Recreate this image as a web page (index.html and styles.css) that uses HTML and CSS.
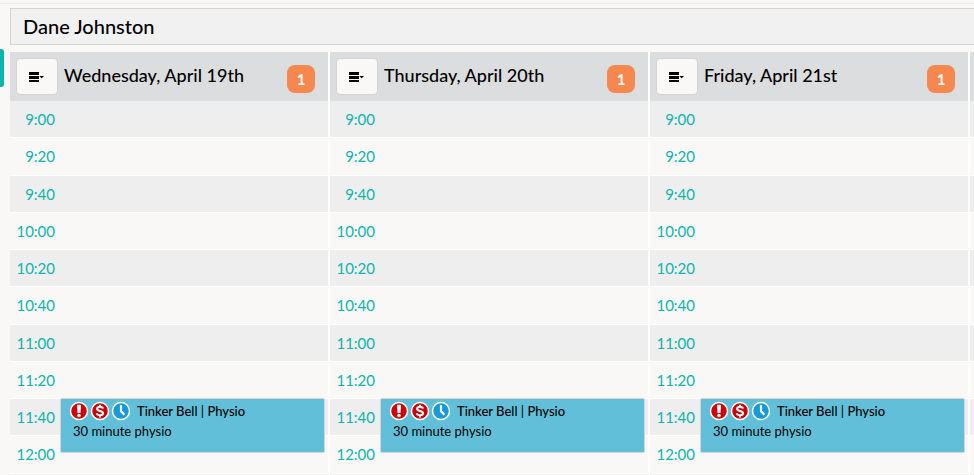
FILE: index.html
```html
<!DOCTYPE html>
<html lang="en">
<head>
<meta charset="utf-8">
<title>Schedule</title>
<link rel="stylesheet" href="styles.css">
</head>
<body>
<svg class="sprite" width="0" height="0" aria-hidden="true">
  <symbol id="menu" viewBox="0 0 16 12">
    <path d="M0 1h10v3H0zM0 5h10v3H0zM0 9h10v2H0z"/>
    <path d="M10.500 5h4.500L12.500 7.500z"/>
  </symbol>
  <symbol id="alert" viewBox="0 0 20 20">
    <circle cx="10" cy="10" r="8.500" fill="#d00006" stroke="#fff" stroke-width="1.500"/>
    <path d="M8 3.800h4L11.500 12h-3z" fill="#fff"/>
    <circle cx="10" cy="14.500" r="1.800" fill="#fff"/>
  </symbol>
  <symbol id="dollar" viewBox="0 0 20 20">
    <circle cx="10" cy="10" r="8.500" fill="#d00006" stroke="#fff" stroke-width="1.500"/>
    <path d="M13 7.600C12.600 6.300 11.500 5.800 10 5.800c-1.700 0-2.900.7-2.900 2 0 1.500 1.400 1.800 2.900 2.200s3 .8 3 2.300c0 1.300-1.200 2-3 2-1.600 0-2.800-.6-3.200-2M10 3.700v2.200M10 14.200v2.200" fill="none" stroke="#fff" stroke-width="2.100"/>
  </symbol>
  <symbol id="clock" viewBox="0 0 20 20">
    <circle cx="10" cy="10" r="8.500" fill="#189ad6" stroke="#fff" stroke-width="1.500"/>
    <path d="M10 4v6.300l3.400 3.400" fill="none" stroke="#fff" stroke-width="2.200"/>
  </symbol>
</svg>
<div class="topline"></div>
<button class="side-tab" aria-label="Open panel"></button>
<main class="schedule">
  <h1 class="staff">Dane Johnston</h1>
  <div class="days">
    <section class="day">
      <header class="day-head">
        <button class="menu" aria-label="Day menu"><svg><use href="#menu"/></svg></button>
        <h2>Wednesday, April 19th</h2>
        <span class="badge">1</span>
      </header>
      <ol class="slots">
        <li>9:00</li><li>9:20</li><li>9:40</li><li>10:00</li><li>10:20</li><li>10:40</li><li>11:00</li><li>11:20</li><li>11:40</li><li>12:00</li>
      </ol>
      <article class="event">
        <div class="event-title"><svg><use href="#alert"/></svg><svg><use href="#dollar"/></svg><svg><use href="#clock"/></svg><h3>Tinker Bell | Physio</h3></div>
        <p>30 minute physio</p>
      </article>
    </section>
    <section class="day">
      <header class="day-head">
        <button class="menu" aria-label="Day menu"><svg><use href="#menu"/></svg></button>
        <h2>Thursday, April 20th</h2>
        <span class="badge">1</span>
      </header>
      <ol class="slots">
        <li>9:00</li><li>9:20</li><li>9:40</li><li>10:00</li><li>10:20</li><li>10:40</li><li>11:00</li><li>11:20</li><li>11:40</li><li>12:00</li>
      </ol>
      <article class="event">
        <div class="event-title"><svg><use href="#alert"/></svg><svg><use href="#dollar"/></svg><svg><use href="#clock"/></svg><h3>Tinker Bell | Physio</h3></div>
        <p>30 minute physio</p>
      </article>
    </section>
    <section class="day">
      <header class="day-head">
        <button class="menu" aria-label="Day menu"><svg><use href="#menu"/></svg></button>
        <h2>Friday, April 21st</h2>
        <span class="badge">1</span>
      </header>
      <ol class="slots">
        <li>9:00</li><li>9:20</li><li>9:40</li><li>10:00</li><li>10:20</li><li>10:40</li><li>11:00</li><li>11:20</li><li>11:40</li><li>12:00</li>
      </ol>
      <article class="event">
        <div class="event-title"><svg><use href="#alert"/></svg><svg><use href="#dollar"/></svg><svg><use href="#clock"/></svg><h3>Tinker Bell | Physio</h3></div>
        <p>30 minute physio</p>
      </article>
    </section>
    <section class="day">
      <header class="day-head"></header>
      <ol class="slots">
        <li></li><li></li><li></li><li></li><li></li><li></li><li></li><li></li><li></li><li></li>
      </ol>
    </section>
  </div>
</main>
</body>
</html>
```
FILE: styles.css
```css
* { box-sizing: border-box; }
body {
  margin: 0;
  background: #f9f8f6;
  color: #000;
  font-family: Lato, "Liberation Sans", sans-serif;
}
h1, h2, h3, p, ol { margin: 0; padding: 0; }
.sprite { position: absolute; }
.topline { height: 4px; border-bottom: 1px solid #e6e7e7; }
.side-tab {
  position: absolute;
  left: 0;
  top: 49px;
  width: 4px;
  height: 38px;
  padding: 0;
  border: 0;
  border-radius: 0 3px 3px 0;
  background: #0bb5ad;
}
.schedule { padding: 4px 0 0 10px; }
.staff {
  height: 37px;
  padding-left: 12px;
  border: 1px solid #d1d5d1;
  border-right: 0;
  background: #f1f1f1;
  font-size: 20px;
  font-weight: 500;
  line-height: 35px;
}
.days {
  display: grid;
  grid-template-columns: repeat(3, 1fr) 4px;
  gap: 2px;
  margin-top: 7px;
  background: #fff;
}
.day { position: relative; min-width: 0; }
.day-head {
  display: flex;
  align-items: center;
  height: 49px;
  padding: 0 13px 0 6px;
  background: #dcddde;
}
.day:last-child .day-head { padding: 0; }
.menu {
  display: flex;
  align-items: center;
  justify-content: center;
  width: 42px;
  height: 37px;
  padding: 0;
  border: 1px solid #d1d5d1;
  border-radius: 4px;
  background: #f9f8f6;
}
.menu svg { width: 16px; height: 12px; }
.day-head h2 {
  flex: 1;
  padding: 0 0 4px 6px;
  font-size: 18px;
  font-weight: 500;
  line-height: 24px;
  white-space: nowrap;
}
.badge {
  width: 28px;
  height: 28px;
  margin-top: 5px;
  border-radius: 8px;
  background: #f5874f;
  color: #fff;
  font-size: 15px;
  font-weight: 700;
  line-height: 28px;
  text-align: center;
}
.slots { list-style: none; border-bottom: 1px solid #eee; }
.slots li {
  height: 37px;
  padding-right: calc(100% - 45px);
  border-bottom: 1px solid #fff;
  background: #eee;
  color: #0bb5ad;
  font-size: 15px;
  font-weight: 400;
  line-height: 36px;
  text-align: right;
}
.day:last-child .slots li { padding: 0; }
.slots li:nth-child(even) { background: #f9f8f6; }
.slots li:nth-child(4n+2) { height: 38px; }
.event {
  position: absolute;
  top: 346px;
  left: 50px;
  right: 3px;
  height: 55px;
  padding: 2px 8px;
  border: 1px solid #d2d4d5;
  border-radius: 2px;
  background: #61bfd9;
}
.event-title { display: flex; align-items: center; gap: 1px; height: 20px; }
.event-title svg { width: 20px; height: 20px; }
.event h3 { padding-left: 5px; font-size: 13px; font-weight: 500; line-height: 20px; }
.event p { padding-left: 4px; font-size: 13px; font-weight: 400; line-height: 20px; }
```
